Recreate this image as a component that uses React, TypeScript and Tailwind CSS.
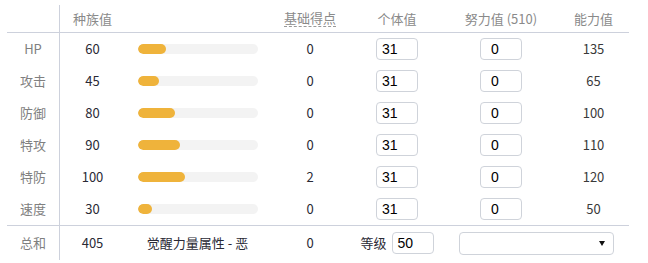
import React from "react";

const stats = [
  { label: "HP", base: 60, pts: 0, iv: 31, ev: 0, val: 135 },
  { label: "攻击", base: 45, pts: 0, iv: 31, ev: 0, val: 65 },
  { label: "防御", base: 80, pts: 0, iv: 31, ev: 0, val: 100 },
  { label: "特攻", base: 90, pts: 0, iv: 31, ev: 0, val: 110 },
  { label: "特防", base: 100, pts: 2, iv: 31, ev: 0, val: 120 },
  { label: "速度", base: 30, pts: 0, iv: 31, ev: 0, val: 50 },
];

const grid = "grid grid-cols-[53px_65px_145px_80px_94px_114px_71px]";
const cell = "flex items-center justify-center";

function Box({ value, pad }: { value: number; pad: string }) {
  return (
    <div
      className={`w-[42px] h-[22px] rounded-[4px] border border-[#cfd3da] bg-white flex items-center text-[14px] text-black ${pad}`}
      style={{ fontFamily: '"Liberation Sans", Arial, sans-serif' }}
    >
      {value}
    </div>
  );
}

export default function App() {
  return (
    <div
      className="w-[648px] h-[263px] bg-white pt-[5px] pl-[7px] overflow-hidden text-[13px]"
      style={{ fontFamily: '"Noto Sans CJK SC", "Noto Sans", sans-serif' }}
    >
      <div className="w-[622px]">
        {/* header */}
        <div className={`${grid} h-[28px] border-b border-[#cdd1dc] text-[#8a8a8a]`}>
          <div className={`${cell} border-r border-[#cdd1dc]`} />
          <div className={cell}>种族值</div>
          <div className={cell} />
          <div className={cell}>
            <span className="border-b border-dashed border-[#999] leading-[16px]">基础得点</span>
          </div>
          <div className={cell}>个体值</div>
          <div className={cell}>努力值 (510)</div>
          <div className={cell}>能力值</div>
        </div>

        {stats.map((s) => (
          <div key={s.label} className={`${grid} h-[32px]`}>
            <div className={`${cell} border-r border-[#cdd1dc] text-[#808080]`}>{s.label}</div>
            <div className={`${cell} text-[#2a2a35]`}>{s.base}</div>
            <div className={cell}>
              <div className="w-[120px] h-[10px] rounded-full bg-[#f3f3f3] overflow-hidden">
                <div
                  className="h-full rounded-full bg-[#efb33b]"
                  style={{ width: `${(s.base / 255) * 120}px` }}
                />
              </div>
            </div>
            <div className={`${cell} text-[#2a2a35]`}>{s.pts}</div>
            <div className={cell}>
              <Box value={s.iv} pad="pl-[5px]" />
            </div>
            <div className={cell}>
              <Box value={s.ev} pad="pl-[10px]" />
            </div>
            <div className={`${cell} text-[#3a3a3a]`}>{s.val}</div>
          </div>
        ))}

        {/* footer */}
        <div className={`${grid} h-[35px] border-t border-[#cdd1dc]`}>
          <div className={`${cell} border-r border-[#cdd1dc] text-[#808080]`}>总和</div>
          <div className={`${cell} text-[#2a2a35]`}>405</div>
          <div className={`${cell} text-[#2a2a35]`}>觉醒力量属性 - 恶</div>
          <div className={`${cell} text-[#2a2a35]`}>0</div>
          <div className={`${cell} gap-[5px] text-[#2a2a35]`}>
            <span>等级</span>
            <Box value={50} pad="pl-[5px]" />
          </div>
          <div className={`${cell} col-span-2`}>
            <div className="w-[155px] h-[23px] rounded-[4px] border border-[#cfd3da] bg-white flex items-center justify-end pr-[8px]">
              <svg width="6" height="5" viewBox="0 0 6 5">
                <path d="M0 0 H6 L3 5 Z" fill="#111" />
              </svg>
            </div>
          </div>
        </div>
      </div>
    </div>
  );
}
